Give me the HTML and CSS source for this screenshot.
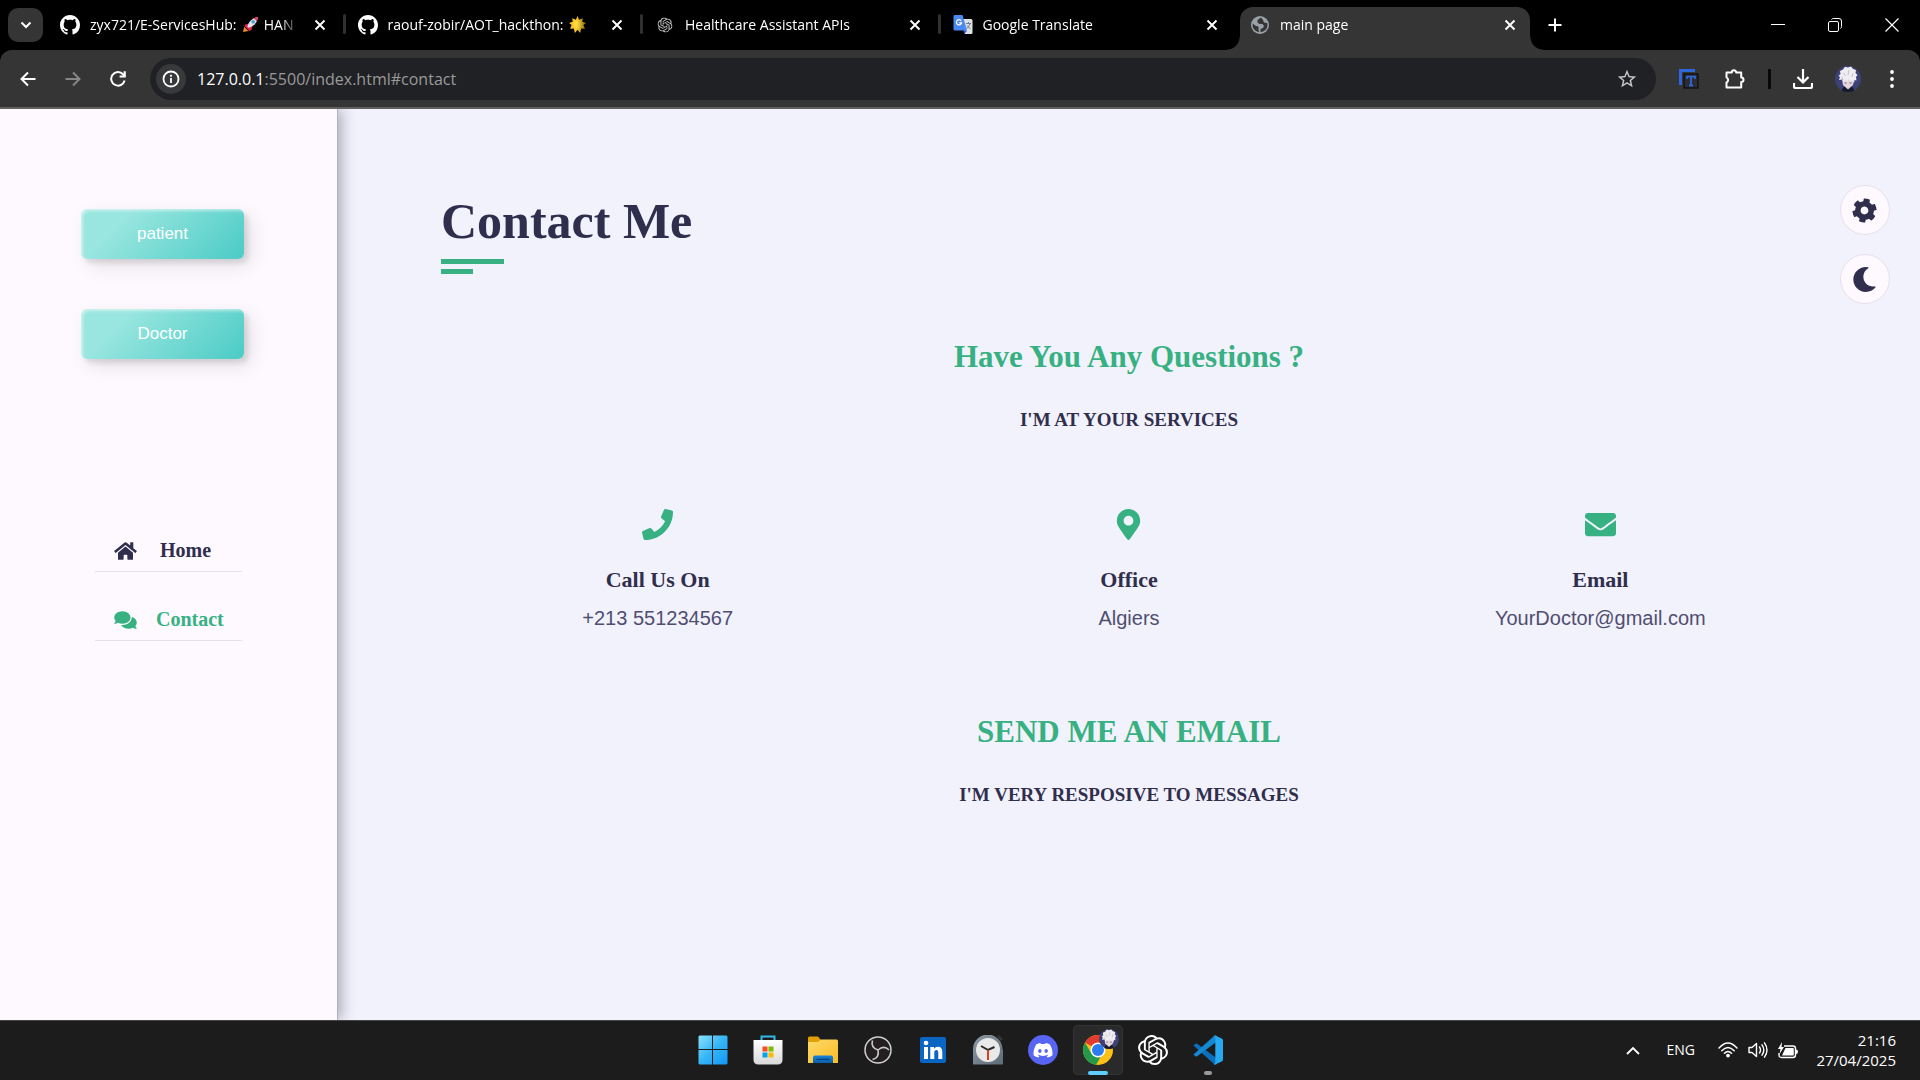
FILE: index.html
```html
<!DOCTYPE html>
<html lang="en">
<head>
<meta charset="utf-8">
<title>main page</title>
<link rel="stylesheet" href="styles.css">
</head>
<body>
<svg class="defs" aria-hidden="true">
  <defs>
    <symbol id="close" viewBox="0 0 12 12"><path d="M1.500 1.500l9 9M10.500 1.500l-9 9" stroke="currentColor" stroke-width="1.900" fill="none"/></symbol>
    <symbol id="github" viewBox="0 0 16 16"><path fill="currentColor" d="M8 0C3.58 0 0 3.58 0 8c0 3.54 2.29 6.53 5.47 7.59.4.07.55-.17.55-.38 0-.19-.01-.82-.01-1.49-2.01.37-2.53-.49-2.69-.94-.09-.23-.48-.94-.82-1.13-.28-.15-.68-.52-.01-.53.63-.01 1.08.58 1.23.82.72 1.21 1.87.87 2.33.66.07-.52.28-.87.51-1.07-1.78-.2-3.64-.89-3.64-3.95 0-.87.31-1.59.82-2.15-.08-.2-.36-1.02.08-2.12 0 0 .67-.21 2.2.82.64-.18 1.32-.27 2-.27.68 0 1.36.09 2 .27 1.53-1.04 2.2-.82 2.2-.82.44 1.1.16 1.92.08 2.12.51.56.82 1.27.82 2.15 0 3.07-1.87 3.75-3.65 3.95.29.25.54.73.54 1.48 0 1.07-.01 1.93-.01 2.2 0 .21.15.46.55.38A8.013 8.013 0 0016 8c0-4.42-3.58-8-8-8z"/></symbol>
    <symbol id="openai" viewBox="0 0 24 24"><path fill="currentColor" d="M22.2819 9.8211a5.9847 5.9847 0 0 0-.5157-4.9108 6.0462 6.0462 0 0 0-6.5098-2.9A6.0651 6.0651 0 0 0 4.9807 4.1818a5.9847 5.9847 0 0 0-3.9977 2.9 6.0462 6.0462 0 0 0 .7427 7.0966 5.98 5.98 0 0 0 .511 4.9107 6.051 6.051 0 0 0 6.5146 2.9001A5.9847 5.9847 0 0 0 13.2599 24a6.0557 6.0557 0 0 0 5.7718-4.2058 5.9894 5.9894 0 0 0 3.9977-2.9001 6.0557 6.0557 0 0 0-.7475-7.0729zm-9.022 12.6081a4.4755 4.4755 0 0 1-2.8764-1.0408l.1419-.0804 4.7783-2.7582a.7948.7948 0 0 0 .3927-.6813v-6.7369l2.02 1.1686a.071.071 0 0 1 .038.052v5.5826a4.504 4.504 0 0 1-4.4945 4.4944zm-9.6607-4.1254a4.4708 4.4708 0 0 1-.5346-3.0137l.142.0852 4.783 2.7582a.7712.7712 0 0 0 .7806 0l5.8428-3.3685v2.3324a.0804.0804 0 0 1-.0332.0615L9.74 19.9502a4.4992 4.4992 0 0 1-6.1408-1.6464zM2.3408 7.8956a4.485 4.485 0 0 1 2.3655-1.9728V11.6a.7664.7664 0 0 0 .3879.6765l5.8144 3.3543-2.0201 1.1685a.0757.0757 0 0 1-.071 0l-4.8303-2.7865A4.504 4.504 0 0 1 2.3408 7.872zm16.5963 3.8558L13.1038 8.364 15.1192 7.2a.0757.0757 0 0 1 .071 0l4.8303 2.7913a4.4944 4.4944 0 0 1-.6765 8.1042v-5.6772a.79.79 0 0 0-.407-.667zm2.0107-3.0231l-.142-.0852-4.7735-2.7818a.7759.7759 0 0 0-.7854 0L9.409 9.2297V6.8974a.0662.0662 0 0 1 .0284-.0615l4.8303-2.7866a4.4992 4.4992 0 0 1 6.6802 4.66zM8.3065 12.863l-2.02-1.1638a.0804.0804 0 0 1-.038-.0567V6.0742a4.4992 4.4992 0 0 1 7.3757-3.4537l-.142.0805L8.704 5.459a.7948.7948 0 0 0-.3927.6813zm1.0976-2.3654l2.602-1.4998 2.6069 1.4998v2.9994l-2.5974 1.4997-2.6067-1.4997Z"/></symbol>
    <symbol id="avatar" viewBox="0 0 26 26">
      <circle cx="13" cy="13" r="13" fill="#3d4178"/>
      <path d="M7 25q0-5 6-5t6 5q-6 2-12 0z" fill="#161a2c"/>
      <path d="M7 11h12l-1 8-5 4.500L8 19z" fill="#e6d6d9"/>
      <path d="M4 14l1-3-1.500-1 2-2-.5-3 3-1.500L10 .8l3 .7L16 .5l2 2.500 3 1-.5 3 2 2-1.500 2 .5 3.500-2-.5-.5 3.500-2-4-1.500 2.500-2-3-2 3-1.500-2.500-2 4-.5-4z" fill="#efedf1"/>
      <path d="M8.500 7l2 3M14 4l-1 5M18 7l-1 4M7 11l1 3" stroke="#b8b4bc" stroke-width=".8" fill="none"/>
      <path d="M9.500 17h2M14.500 17h2" stroke="#5b6590" stroke-width="1.200"/>
    </symbol>
    <linearGradient id="winGrad" x1="0" y1="0" x2="1" y2="1"><stop offset="0" stop-color="#8be2fb"/><stop offset=".5" stop-color="#35b5f5"/><stop offset="1" stop-color="#1298f5"/></linearGradient>
    <linearGradient id="bagGrad" x1="0" y1="0" x2="0" y2="1"><stop offset="0" stop-color="#fff"/><stop offset="1" stop-color="#d9d9d9"/></linearGradient>
    <linearGradient id="folderGrad" x1="0" y1="0" x2="1" y2="1"><stop offset="0" stop-color="#ffd96b"/><stop offset="1" stop-color="#f9bd25"/></linearGradient>
    <linearGradient id="trayGrad" x1="0" y1="0" x2="0" y2="1"><stop offset="0" stop-color="#1683d8"/><stop offset="1" stop-color="#0d5fa8"/></linearGradient>
    <linearGradient id="clockGrad" x1="0" y1="0" x2="1" y2="1"><stop offset="0" stop-color="#8d99a3"/><stop offset="1" stop-color="#5e6c78"/></linearGradient>
  </defs>
</svg>

<header class="browser">
  <div class="tabstrip">
    <button class="tab-search" aria-label="Search tabs"><svg width="12" height="8" viewBox="0 0 12 8"><path d="M1.500 1.500L6 6l4.500-4.500" fill="none" stroke="#fff" stroke-width="2"/></svg></button>
    <div class="tabs">
      <div class="tab">
        <svg class="favicon" viewBox="0 0 16 16"><use href="#github"/></svg>
        <span class="tab-title">zyx721/E-ServicesHub: <svg class="emoji" viewBox="0 0 16 16"><path d="M1 15l1-5 4 4z" fill="#f08a24"/><path d="M4 8L1.500 9.500 5 10zM8 12l-1.500 3L6 11z" fill="#c5164a"/><path d="M3 8l4-1 3 2-1 4-2 1-4-4z" fill="#e0264e"/><path d="M5 10Q7 2 15 1q-1 8-9 10z" fill="#dde3ea"/><path d="M11 2l4-1-1 4z" fill="#e8305a"/><circle cx="10.500" cy="5.500" r="1.700" fill="#4c9bd8"/></svg> HAN</span>
        <button class="tab-close" aria-label="Close tab"><svg width="12" height="12"><use href="#close"/></svg></button>
      </div>
      <div class="tab">
        <svg class="favicon" viewBox="0 0 16 16"><use href="#github"/></svg>
        <span class="tab-title">raouf-zobir/AOT_hackthon: <svg class="emoji" viewBox="0 0 16 16"><path d="M8 0l1.500 3.500L13 2l-.5 3.500L16 6.500l-2.500 2L15 12l-3.500-.2L10.500 16 8 13l-2.500 3-1-4.200L1 12l1.500-3.500L0 6.500l3.500-1L3 2l3.500 1.500z" fill="#f9c928"/><circle cx="8" cy="8" r="3.500" fill="#ffd93f"/></svg></span>
        <button class="tab-close" aria-label="Close tab"><svg width="12" height="12"><use href="#close"/></svg></button>
      </div>
      <div class="tab">
        <svg class="favicon gray" viewBox="-4 -4 32 32"><use href="#openai" width="24" height="24"/></svg>
        <span class="tab-title">Healthcare Assistant APIs</span>
        <button class="tab-close" aria-label="Close tab"><svg width="12" height="12"><use href="#close"/></svg></button>
      </div>
      <div class="tab">
        <svg class="favicon" viewBox="0 0 20 20"><path d="M8 4h10q1.500 0 1.500 1.500v12q0 1.500-1.500 1.500h-6z" fill="#dfe1e4"/><path d="M1.500 0h8l4.500 15.500H2q-1.500 0-1.500-1.500V1.500Q.5 0 1.500 0z" fill="#4a89f3"/><path d="M10 15.500h4L11.500 19z" fill="#2554c7"/><path d="M8.200 5.800a2.600 2.600 0 1 0 .4 2H6.200" fill="none" stroke="#fff" stroke-width="1.200"/><path d="M13 8.500h5M15.500 7v1.500M17 8.500q-1 4-3.500 5M14 10.500l3.500 3.500" fill="none" stroke="#6d7f93" stroke-width="1"/></svg>
        <span class="tab-title">Google Translate</span>
        <button class="tab-close" aria-label="Close tab"><svg width="12" height="12"><use href="#close"/></svg></button>
      </div>
      <div class="tab active">
        <svg class="favicon" viewBox="0 0 20 20"><circle cx="10" cy="10" r="9" fill="#9aa0a6"/><path d="M11 2.500L7.500 5v2.500l2 1.500h3l1.500 2-1 2-2.500 1v3.300A7.500 7.500 0 0 0 17.500 10q0-1-.3-2L14 7.500 13 5zM2.700 8.500L6 11l2.500.5V14L9 17.300A7.500 7.500 0 0 1 2.700 8.500z" fill="#353535"/></svg>
        <span class="tab-title">main page</span>
        <button class="tab-close" aria-label="Close tab"><svg width="12" height="12"><use href="#close"/></svg></button>
      </div>
    </div>
    <button class="new-tab" aria-label="New tab"><svg width="14" height="14" viewBox="0 0 14 14"><path d="M7 .5v13M.5 7h13" stroke="#fff" stroke-width="2"/></svg></button>
    <div class="window-controls">
      <button aria-label="Minimize"><svg width="14" height="14" viewBox="0 0 14 14"><path d="M0 6.500h14" stroke="#fff"/></svg></button>
      <button aria-label="Restore"><svg width="14" height="14" viewBox="0 0 14 14"><rect x=".5" y="3.500" width="10" height="10" rx="1.500" fill="none" stroke="#fff"/><path d="M3.500 1.500Q4 .5 5.500.5H11q2.500 0 2.500 2.500v5.500q0 1.500-1 2" fill="none" stroke="#fff"/></svg></button>
      <button aria-label="Close window"><svg width="14" height="14" viewBox="0 0 14 14"><path d="M.5.5l13 13M13.500.5l-13 13" stroke="#fff" stroke-width="1.200"/></svg></button>
    </div>
  </div>

  <div class="toolbar">
    <div class="nav-buttons">
      <button aria-label="Back"><svg width="16" height="16" viewBox="0 0 16 16"><path d="M15.500 8H2M8 1.500L1.500 8 8 14.500" fill="none" stroke="#fff" stroke-width="2"/></svg></button>
      <button aria-label="Forward" disabled><svg width="16" height="16" viewBox="0 0 16 16"><path d="M.5 8H14M8 1.500L14.500 8 8 14.500" fill="none" stroke="#868686" stroke-width="2"/></svg></button>
      <button aria-label="Reload"><svg width="16" height="16" viewBox="0 0 16 16"><path d="M14.600 9.500A6.800 6.800 0 1 1 13 3.200L15 5" fill="none" stroke="#fff" stroke-width="2"/><path d="M15.800.3v6.200H9.600V4.600h4V.3z" fill="#fff"/></svg></button>
    </div>
    <div class="address">
      <span class="info"><svg width="18" height="18" viewBox="0 0 18 18"><circle cx="9" cy="9" r="7.500" fill="none" stroke="#fff" stroke-width="1.800"/><path d="M9 8v5M9 4.800v1.900" stroke="#fff" stroke-width="1.800"/></svg></span>
      <a class="url" href="#contact"><b>127.0.0.1</b>:5500/index.html#contact</a>
      <button class="star" aria-label="Bookmark this tab"><svg width="22" height="22" viewBox="0 0 24 24"><path fill="#c7c7c7" d="M22 9.240l-7.190-.62L12 2 9.190 8.630 2 9.240l5.460 4.730L5.820 21 12 17.270 18.180 21l-1.630-7.030L22 9.240zM12 15.400l-3.760 2.270 1-4.280-3.320-2.880 4.380-.38L12 6.100l1.710 4.040 4.380.38-3.320 2.880 1 4.280L12 15.400z"/></svg></button>
    </div>
    <div class="extensions">
      <button class="translate" aria-label="Translate extension"><svg width="20" height="20" viewBox="0 0 20 20"><path d="M1.500 16V1.500H16" fill="none" stroke="#2f66da" stroke-width="3"/><rect x="5" y="5" width="14" height="14" fill="#2b2d33" stroke="#050505"/><path d="M8 10V7.700h8V10M12 8v8.500M10 16.500h4" stroke="#2f66da" stroke-width="1.800" fill="none"/></svg></button>
      <button aria-label="Extensions"><svg width="22" height="22" viewBox="0 0 22 22"><path d="M2.500 4.500H7.800a2.200 2.200 0 1 1 4.400 0h5v5a2.300 2.300 0 1 1 0 4.600v5.400H2.500v-5a2.900 2.900 0 0 0 0-5.200z" fill="none" stroke="#fff" stroke-width="2" stroke-linejoin="round"/></svg></button>
      <span class="divider"></span>
      <button aria-label="Downloads"><svg width="20" height="20" viewBox="0 0 20 20"><path d="M10 0v13M4.500 8l5.500 5.500L15.500 8M1 14v3.500q0 1.500 1.500 1.500h15q1.500 0 1.500-1.500V14" fill="none" stroke="#fff" stroke-width="2.200"/></svg></button>
      <button aria-label="Profile"><svg width="26" height="26"><use href="#avatar"/></svg></button>
      <button class="more" aria-label="Menu"><svg width="4" height="20" viewBox="0 0 4 20"><circle cx="2" cy="3" r="1.900" fill="#fff"/><circle cx="2" cy="10" r="1.900" fill="#fff"/><circle cx="2" cy="17" r="1.900" fill="#fff"/></svg></button>
    </div>
  </div>
</header>

<div class="site">
  <aside class="sidebar">
    <div class="roles">
      <button class="role">patient</button>
      <button class="role">Doctor</button>
    </div>
    <nav class="menu">
      <a class="home" href="#home"><svg viewBox="0 0 576 512"><path fill="currentColor" d="M280.370 148.260L96 300.110V464a16 16 0 0 0 16 16l112.060-.29a16 16 0 0 0 15.920-16V368a16 16 0 0 1 16-16h64a16 16 0 0 1 16 16v95.640a16 16 0 0 0 16 16.050L464 480a16 16 0 0 0 16-16V300L295.670 148.260a12.190 12.190 0 0 0-15.300 0zM571.600 251.470L488 182.560V44.050a12 12 0 0 0-12-12h-56a12 12 0 0 0-12 12v72.610L318.470 43a48 48 0 0 0-61 0L4.340 251.470a12 12 0 0 0-1.600 16.900l25.500 31A12 12 0 0 0 45.150 301l235.220-193.740a12.190 12.190 0 0 1 15.300 0L530.900 301a12 12 0 0 0 16.900-1.600l25.500-31a12 12 0 0 0-1.700-16.930z"/></svg>Home</a>
      <a class="current" href="#contact"><svg viewBox="0 0 576 512"><path fill="currentColor" d="M416 192c0-88.400-93.100-160-208-160S0 103.600 0 192c0 34.300 14.100 65.900 38 92-13.400 30.200-35.500 54.200-35.800 54.500-2.200 2.300-2.800 5.700-1.500 8.700S4.800 352 8 352c36.600 0 66.900-12.300 88.700-25 32.200 15.700 70.300 25 111.300 25 114.900 0 208-71.600 208-160zm122 220c23.900-26 38-57.700 38-92 0-66.900-53.500-124.200-129.300-148.100.9 6.600 1.300 13.300 1.300 20.100 0 105.900-107.700 192-240 192-10.800 0-21.300-.8-31.700-1.900C207.800 439.600 281.800 480 368 480c41 0 79.100-9.200 111.300-25 21.800 12.700 52.100 25 88.700 25 3.200 0 6.100-1.900 7.300-4.800 1.300-2.900.7-6.300-1.500-8.700-.3-.3-22.400-24.200-35.800-54.500z"/></svg>Contact</a>
    </nav>
  </aside>

  <main class="contact" id="contact">
    <h1>Contact Me</h1>
    <h2>Have You Any Questions ?</h2>
    <h3>I'M AT YOUR SERVICES</h3>
    <div class="cards">
      <section>
        <svg viewBox="0 0 512 512"><path fill="currentColor" d="M493.400 24.600l-104-24c-11.300-2.600-22.900 3.300-27.500 13.900l-48 112c-4.200 9.800-1.400 21.300 6.900 28l60.600 49.600c-36 76.700-98.900 140.500-177.200 177.200l-49.600-60.600c-6.800-8.300-18.200-11.100-28-6.900l-112 48C3.900 366.500-2 378.100.6 389.400l24 104C27.100 504.200 36.700 512 48 512c256.100 0 464-207.500 464-464 0-11.200-7.700-20.900-18.600-23.400z"/></svg>
        <h4>Call Us On</h4>
        <p>+213 551234567</p>
      </section>
      <section>
        <svg viewBox="-64 0 512 512"><path fill="currentColor" d="M172.268 501.670C26.970 291.031 0 269.413 0 192 0 85.961 85.961 0 192 0s192 85.961 192 192c0 77.413-26.970 99.031-172.268 309.670-9.535 13.774-29.930 13.773-39.464 0zM192 272c44.183 0 80-35.817 80-80s-35.817-80-80-80-80 35.817-80 80 35.817 80 80 80z"/></svg>
        <h4>Office</h4>
        <p>Algiers</p>
      </section>
      <section>
        <svg viewBox="0 0 512 512"><path fill="currentColor" d="M502.300 190.800c3.900-3.100 9.700-.2 9.700 4.700V400c0 26.500-21.500 48-48 48H48c-26.500 0-48-21.500-48-48V195.600c0-5 5.700-7.800 9.700-4.700 22.400 17.400 52.100 39.500 154.100 113.600 21.100 15.400 56.700 47.800 92.200 47.600 35.700.3 72-32.800 92.300-47.600 102-74.100 131.600-96.300 154-113.700zM256 320c23.200.4 56.600-29.200 73.400-41.400 132.700-96.300 142.800-104.700 173.400-128.700 5.800-4.500 9.200-11.500 9.200-18.900v-19c0-26.500-21.500-48-48-48H48c-26.500 0-48 21.500-48 48v19c0 7.400 3.400 14.300 9.200 18.900 30.600 23.900 40.700 32.400 173.400 128.700 16.800 12.200 50.200 41.800 73.400 41.400z"/></svg>
        <h4>Email</h4>
        <p>YourDoctor@gmail.com</p>
      </section>
    </div>
    <h2>SEND ME AN EMAIL</h2>
    <h3>I'M VERY RESPOSIVE TO MESSAGES</h3>
    <div class="switcher">
      <button aria-label="Settings"><svg viewBox="0 0 512 512"><path transform="rotate(12 256 256)" fill="currentColor" d="M487.400 315.700l-42.600-24.600c4.300-23.200 4.300-47 0-70.200l42.600-24.600c4.900-2.800 7.100-8.600 5.500-14-11.100-35.600-30-67.800-54.700-94.600-3.800-4.100-10-5.100-14.800-2.300L380.800 110c-17.900-15.400-38.500-27.300-60.800-35.100V25.800c0-5.600-3.900-10.500-9.400-11.700-36.700-8.200-74.300-7.800-109.200 0-5.500 1.200-9.400 6.100-9.400 11.700V75c-22.200 7.900-42.800 19.800-60.800 35.100L88.700 85.500c-4.900-2.800-11-1.900-14.800 2.300-24.700 26.700-43.600 58.900-54.700 94.600-1.700 5.400.6 11.200 5.500 14L67.300 221c-4.300 23.200-4.300 47 0 70.200l-42.600 24.600c-4.900 2.800-7.100 8.600-5.500 14 11.100 35.600 30 67.800 54.700 94.600 3.800 4.100 10 5.100 14.800 2.300l42.600-24.600c17.900 15.400 38.500 27.300 60.800 35.100v49.200c0 5.600 3.900 10.500 9.400 11.700 36.700 8.200 74.300 7.800 109.200 0 5.500-1.200 9.400-6.100 9.400-11.700v-49.200c22.200-7.900 42.800-19.800 60.800-35.100l42.600 24.600c4.900 2.800 11 1.900 14.800-2.300 24.700-26.700 43.600-58.900 54.700-94.600 1.500-5.500-.7-11.300-5.600-14.100zM256 336c-44.100 0-80-35.900-80-80s35.900-80 80-80 80 35.900 80 80-35.900 80-80 80z"/></svg></button>
      <button aria-label="Dark mode"><svg viewBox="0 0 512 512"><path fill="currentColor" d="M283.211 512c78.962 0 151.079-35.925 198.857-94.792 7.068-8.708-.639-21.430-11.562-19.350-124.203 23.654-238.262-71.576-238.262-196.954 0-72.222 38.662-138.635 101.498-174.394 9.686-5.512 7.250-20.197-3.756-22.230A258.156 258.156 0 0 0 283.211 0c-141.309 0-256 114.511-256 256 0 141.309 114.511 256 256 256z"/></svg></button>
    </div>
  </main>
</div>

<footer class="taskbar">
  <div class="apps">
    <button aria-label="Start"><svg width="30" height="30" viewBox="0 0 30 30"><path d="M1.500.5H14V14H.5V1.500zM15 .5h13.500l1 1V14H15zM.5 15H14v14.500H1.500l-1-1zM15 15h14.500v13.500l-1 1H15z" fill="url(#winGrad)"/></svg></button>
    <button aria-label="Microsoft Store"><svg width="30" height="30" viewBox="0 0 30 30"><path d="M8.500 6V1.500h13V6" fill="none" stroke="#32b8e8" stroke-width="2"/><path d="M.5 5h29v19.500q0 5-5 5h-19q-5 0-5-5z" fill="url(#bagGrad)"/><path d="M9.500 11.500h5v5h-5z" fill="#f25022"/><path d="M15.500 11.500h5v5h-5z" fill="#7fba00"/><path d="M9.500 17.500h5v5h-5z" fill="#00a4ef"/><path d="M15.500 17.500h5v5h-5z" fill="#ffb900"/></svg></button>
    <button aria-label="File Explorer"><svg width="30" height="30" viewBox="0 0 30 30"><path d="M0 3q0-1.500 1.500-1.500H10L13 5v5H0z" fill="#e0a106"/><path d="M0 7h10l3-2.500h15.500q1.500 0 1.500 1.500v22H0z" fill="url(#folderGrad)"/><path d="M5 28v-5.500q0-2 2-2h16q2 0 2 2V28z" fill="url(#trayGrad)"/><path d="M8.500 24.300h13" stroke="#0a3f78" stroke-width="1.200"/></svg></button>
    <button aria-label="OBS Studio"><svg width="28" height="28" viewBox="0 0 28 28"><circle cx="14" cy="14" r="13" fill="#231f20" stroke="#d0d0d0" stroke-width="1.500"/><g fill="none" stroke="#c8c8c8" stroke-width="1.600"><path d="M14 14Q6.500 11.500 8.500 4.500"/><path d="M14 14Q6.500 11.500 8.500 4.500" transform="rotate(120 14 14)"/><path d="M14 14Q6.500 11.500 8.500 4.500" transform="rotate(240 14 14)"/></g></svg></button>
    <button aria-label="LinkedIn"><svg width="26" height="26" viewBox="0 0 26 26"><rect width="26" height="26" rx="2" fill="#0a66c2"/><circle cx="6" cy="6" r="2.300" fill="#fff"/><path d="M4 10h4v12H4zM10.300 10H14v1.700q1.200-2 3.900-2 4.400 0 4.400 5.300v7h-4v-6.200q0-2.800-2-2.800-2 0-2 2.800V22h-4z" fill="#fff"/></svg></button>
    <button aria-label="Clock"><svg width="30" height="30" viewBox="0 0 30 30"><path d="M24 1.500l2-1.500 4 4-2 2z" fill="#343434"/><path d="M0 29.500V14.500a14.500 14.500 0 0 1 29.500-.5q.5.500.5 2v13.500z" fill="url(#clockGrad)"/><circle cx="15" cy="15" r="12" fill="#e9e9e9"/><path d="M8 11l7 4 6.500-3" fill="none" stroke="#2a2a2a" stroke-width="2"/><path d="M15 15v10" stroke="#d9401a" stroke-width="2"/></svg></button>
    <button aria-label="Discord"><svg width="30" height="30" viewBox="0 0 30 30"><circle cx="15" cy="15" r="15" fill="#5865f2"/><path transform="translate(5.500 5.800) scale(1.190)" fill="#fff" d="M13.545 2.907a13.200 13.200 0 0 0-3.257-1.011.05.05 0 0 0-.052.025c-.141.25-.297.577-.406.833a12.200 12.200 0 0 0-3.658 0 8 8 0 0 0-.412-.833.05.05 0 0 0-.052-.025c-1.125.194-2.220.534-3.257 1.011a.04.04 0 0 0-.021.018C.356 6.024-.213 9.047.066 12.032q.003.022.021.037a13.300 13.300 0 0 0 3.995 2.020.05.05 0 0 0 .056-.019q.463-.63.818-1.329a.05.05 0 0 0-.01-.059l-.018-.011a9 9 0 0 1-1.248-.595.05.05 0 0 1-.02-.066l.015-.019q.127-.095.248-.195a.05.05 0 0 1 .051-.007c2.619 1.196 5.454 1.196 8.041 0a.05.05 0 0 1 .053.007q.121.1.248.195a.05.05 0 0 1-.004.085 8 8 0 0 1-1.249.594.05.05 0 0 0-.03.03.05.05 0 0 0 .003.041c.24.465.515.909.817 1.329a.05.05 0 0 0 .056.019 13.200 13.200 0 0 0 4.001-2.020.05.05 0 0 0 .021-.037c.334-3.451-.559-6.449-2.366-9.106a.03.03 0 0 0-.02-.019m-8.198 7.307c-.789 0-1.438-.724-1.438-1.612s.637-1.613 1.438-1.613c.807 0 1.450.73 1.438 1.613 0 .888-.637 1.612-1.438 1.612m5.316 0c-.788 0-1.438-.724-1.438-1.612s.637-1.613 1.438-1.613c.807 0 1.451.73 1.438 1.613 0 .888-.631 1.612-1.438 1.612"/></svg></button>
    <button class="running focused" aria-label="Google Chrome"><svg width="50" height="50" viewBox="0 0 50 50"><circle cx="25" cy="25" r="15" fill="#fbc116"/><path d="M25 25L12 17.500A15 15 0 0 1 38 17.500z" fill="#e33b2e"/><path d="M12 17.500l6.500 11.200L25 32.500 20.500 39.300A15 15 0 0 1 12 17.500z" fill="#229a4a"/><path d="M20 39.100l5-7.100 3-1-5 8.900z" fill="#229a4a"/><circle cx="25" cy="25" r="7.500" fill="#fff"/><circle cx="25" cy="25" r="6" fill="#2a7cf0"/><use href="#avatar" x="26" y="4" width="20" height="20"/></svg></button>
    <button aria-label="ChatGPT"><svg width="30" height="30"><use href="#openai"/></svg></button>
    <button class="running" aria-label="Visual Studio Code"><svg width="30" height="30" viewBox="0 0 30 30"><path d="M.5 10.500L2.500 8.700q.8-.6 1.700 0L24 23.500v5.500q-1.500 1-3 0z" fill="#0a70bb"/><path d="M.5 19.500l2 1.800q.8.600 1.700 0L24 6.500V1q-1.500-1-3 0z" fill="#1488d2"/><path d="M21.500.3L28.700 3.500Q30 4.200 30 5.500v19q0 1.300-1.300 2L21.500 29.700Q20 30 22.300 27.500v-25Q20.500.5 21.500.3z" fill="#27a9f1"/></svg></button>
  </div>
  <div class="tray">
    <button aria-label="Show hidden icons"><svg width="14" height="9" viewBox="0 0 14 9"><path d="M1 8l6-6 6 6" fill="none" stroke="#fff" stroke-width="1.800"/></svg></button>
    <span class="lang">ENG</span>
    <button class="status" aria-label="Network, volume and battery">
      <svg width="20" height="16" viewBox="0 0 20 16"><g fill="none" stroke="#fff" stroke-width="1.500" stroke-linecap="round"><path d="M1 6q9-10 18 0M3.800 8.800q6.200-6.600 12.400 0M6.500 11.300q3.500-3.600 7 0"/></g><circle cx="10" cy="13.600" r="1.900" fill="#fff"/></svg>
      <svg width="20" height="18" viewBox="0 0 20 18"><g fill="none" stroke="#fff" stroke-width="1.400" stroke-linejoin="round" stroke-linecap="round"><path d="M1 6.500h3L8.500 2.500v13L4 11.500H1zM11.500 6q2 3 0 6M14 3.800q3.600 5.200 0 10.400M16.500 1.800q5 7.200 0 14.400"/></g></svg>
      <svg width="20" height="17" viewBox="0 0 20 17"><path d="M6 4h9q2.500 0 2.500 2.500v6.500q0 2.500-2.500 2.500H3.500Q1 15.500 1 13v-2" fill="none" stroke="#fff" stroke-width="1.400"/><path d="M7.500 6H15q.8 0 .8.800v6q0 .8-.8.800H4zM18 7.500q2 0 2 2.200T18 12zM4 0L0 7h2.500L1.500 12 6 5H3.500z" fill="#fff"/></svg>
    </button>
    <div class="clock"><span>21:16</span><span>27/04/2025</span></div>
  </div>
</footer>
</body>
</html>
```
FILE: styles.css
```css
:root {
  --ui: "Open Sans", "Noto Sans", sans-serif;
  --serif: "Liberation Serif", "Times New Roman", serif;
  --sans: "Liberation Sans", Arial, sans-serif;
  --chrome: #353535;
  --ink: #302e4d;
  --green: #37b182;
  --panel: #fdf9ff;
}

* { box-sizing: border-box; }

body {
  margin: 0;
  min-height: 100vh;
  display: flex;
  flex-direction: column;
  font-family: var(--ui);
}

h1, h2, h3, h4, p { margin: 0; }

button {
  margin: 0;
  padding: 0;
  border: 0;
  background: none;
  color: inherit;
  display: flex;
  align-items: center;
  justify-content: center;
}

svg { display: block; flex: none; }
.defs { position: absolute; width: 0; height: 0; }

/* Browser frame */
.browser {
  background: #000;
  color: #fff;
  border-bottom: 2px solid #60605c;
}

.tabstrip {
  display: flex;
  align-items: center;
  height: 50px;
  padding-left: 8px;
}

.tab-search {
  width: 35px;
  height: 34px;
  border-radius: 10px;
  background: var(--chrome);
}

.tabs {
  display: flex;
  flex: 0 1 1487px;
  min-width: 0;
  height: 100%;
  padding-top: 7px;
}

.tab {
  position: relative;
  flex: 1 1 0;
  min-width: 0;
  display: flex;
  align-items: center;
  padding: 0 11px 7px 17px;
  font-size: 14px;
  line-height: 20px;
}

.tab:nth-child(-n+3)::after {
  content: "";
  position: absolute;
  right: -5px;
  top: 7px;
  width: 3px;
  height: 20px;
  border-radius: 2px;
  background: #303030;
}

.tab.active {
  flex: 0 1 290px;
  margin-left: 7px;
  padding: 0 10px 7px 10px;
  background: var(--chrome);
  border-radius: 13px 13px 0 0;
}

.tab.active::before,
.tab.active::after {
  content: "";
  position: absolute;
  bottom: 0;
  width: 13px;
  height: 13px;
}

.tab.active::before {
  right: 100%;
  background: radial-gradient(circle at 0 0, transparent 12px, var(--chrome) 13px);
}

.tab.active::after {
  left: 100%;
  background: radial-gradient(circle at 100% 0, transparent 12px, var(--chrome) 13px);
}

.favicon { width: 20px; height: 20px; }
.favicon.gray { color: #c4c4c4; }

.tab-title {
  flex: 1;
  min-width: 0;
  margin: 0 10px;
  overflow: hidden;
  white-space: nowrap;
  -webkit-mask-image: linear-gradient(to left, transparent, #000 20px);
  mask-image: linear-gradient(to left, transparent, #000 20px);
}

.emoji {
  display: inline-block;
  width: 17px;
  height: 17px;
  margin: 0 1px 0 2px;
  vertical-align: -3px;
}

.tab-close { width: 20px; height: 20px; }
.new-tab { width: 40px; height: 40px; margin-left: 5px; }

.window-controls {
  display: flex;
  align-self: stretch;
  margin-left: auto;
}

.window-controls button { width: 57px; }

.toolbar {
  display: flex;
  align-items: center;
  gap: 12px;
  height: 57px;
  padding: 0 12px;
  background: var(--chrome);
  border-radius: 12px 12px 0 0;
}

.nav-buttons { display: flex; gap: 13px; width: 126px; }
.nav-buttons button { width: 32px; height: 32px; }

.address {
  flex: 1;
  display: flex;
  align-items: center;
  height: 42px;
  padding: 0 18px 0 6px;
  border-radius: 21px;
  background: #202124;
}

.info {
  display: flex;
  align-items: center;
  justify-content: center;
  width: 30px;
  height: 30px;
  border-radius: 50%;
  background: #38393b;
}

.url {
  flex: 1;
  margin-left: 11px;
  color: #9a9a9a;
  font-size: 16px;
  line-height: 24px;
  text-decoration: none;
}

.url b { color: #fff; font-weight: 400; }

.extensions {
  display: flex;
  align-items: center;
  gap: 22px;
  padding: 0 14px 0 11px;
}

.translate { margin-right: 3px; }
.more { margin-left: 7px; }
.divider { width: 3px; height: 20px; background: #080808; }

/* Web page */
.site {
  flex: 1;
  display: flex;
  background: #f2f2fc;
}

.sidebar {
  flex: none;
  width: 338px;
  padding-top: 100px;
  background: var(--panel);
  border-right: 1px solid #b5b0bd;
  box-shadow: 3px 0 14px rgba(48, 46, 77, .4);
  clip-path: inset(0 -24px 0 0);
}

.roles {
  display: flex;
  flex-direction: column;
  align-items: center;
  gap: 50px;
  padding-right: 12px;
}

.role {
  width: 163px;
  height: 50px;
  border-radius: 6px;
  background: linear-gradient(135deg, #98e6df 25%, #4bcbc5 100%);
  box-shadow:
    inset 2px 2px 3px rgba(255, 255, 255, .5),
    7px 7px 20px rgba(0, 0, 0, .1),
    4px 4px 5px rgba(0, 0, 0, .1);
  color: #fff;
  font: 17px/20px var(--sans);
}

.menu {
  display: flex;
  flex-direction: column;
  gap: 35px;
  width: 147px;
  margin: 179px auto 0;
}

.menu a {
  display: flex;
  align-items: center;
  gap: 19px;
  padding: 0 18px 8px 19px;
  border-bottom: 1px solid #e4dfe8;
  color: var(--ink);
  font: bold 20px/25px var(--serif);
  text-decoration: none;
}

.menu .home { gap: 23px; }
.menu .current { color: var(--green); }
.menu svg { width: 23px; height: 20px; }

.contact {
  position: relative;
  flex: 1;
  min-width: 0;
  padding: 82px 84px 40px;
  color: var(--ink);
  font-family: var(--serif);
  text-align: center;
}

.contact h1 {
  padding-left: 19px;
  font-size: 50px;
  line-height: 60px;
  text-align: left;
}

.contact h1::after {
  content: "";
  display: block;
  width: 63px;
  height: 15px;
  margin-top: 8px;
  background:
    linear-gradient(var(--green), var(--green)) 0 0 / 63px 5px no-repeat,
    linear-gradient(var(--green), var(--green)) 0 10px / 32px 5px no-repeat;
}

.contact h2 {
  margin-top: 65px;
  color: var(--green);
  font-size: 31px;
  line-height: 36px;
}

.contact h3 {
  margin-top: 34px;
  font-size: 19px;
  line-height: 22px;
}

.cards {
  display: grid;
  grid-template-columns: repeat(3, 1fr);
  margin-top: 78px;
}

.cards section {
  display: flex;
  flex-direction: column;
  align-items: center;
}

.cards svg { width: 31px; height: 31px; color: var(--green); }
.cards h4 { margin-top: 27px; font-size: 22px; line-height: 26px; }

.cards p {
  margin-top: 13px;
  color: #504e70;
  font: 20px/24px var(--sans);
}

.cards + h2 { margin-top: 84px; }

.switcher {
  position: absolute;
  top: 76px;
  right: 30px;
  display: flex;
  flex-direction: column;
  gap: 19px;
}

.switcher button {
  width: 50px;
  height: 50px;
  padding-right: 1px;
  border: 1px solid #e8dfec;
  border-radius: 50%;
  background: var(--panel);
  color: var(--ink);
}

.switcher svg { width: 25px; height: 25px; }

/* Taskbar */
.taskbar {
  display: grid;
  grid-template-columns: 1fr auto 1fr;
  align-items: center;
  height: 60px;
  padding-bottom: 1px;
  border-top: 1px solid #454545;
  background: #1c1c1c;
  color: #fff;
}

.apps { grid-column: 2; display: flex; gap: 5px; }

.apps button {
  position: relative;
  width: 50px;
  height: 50px;
  border-radius: 5px;
}

.apps .focused { background: #2a2a2a; box-shadow: inset 0 0 0 1px #343434; }

.running::after {
  content: "";
  position: absolute;
  bottom: 0;
  width: 8px;
  height: 4px;
  border-radius: 2px;
  background: #9a9a9a;
}

.focused::after { width: 20px; background: #60cdff; }

.tray {
  display: flex;
  align-items: center;
  justify-content: flex-end;
  padding-right: 24px;
  font-size: 14px;
  line-height: 20px;
}

.lang { margin: 0 23px 0 27px; }
.status { gap: 10px; }

.clock {
  display: flex;
  flex-direction: column;
  width: 98px;
  font-size: 15px;
  text-align: right;
}
```
